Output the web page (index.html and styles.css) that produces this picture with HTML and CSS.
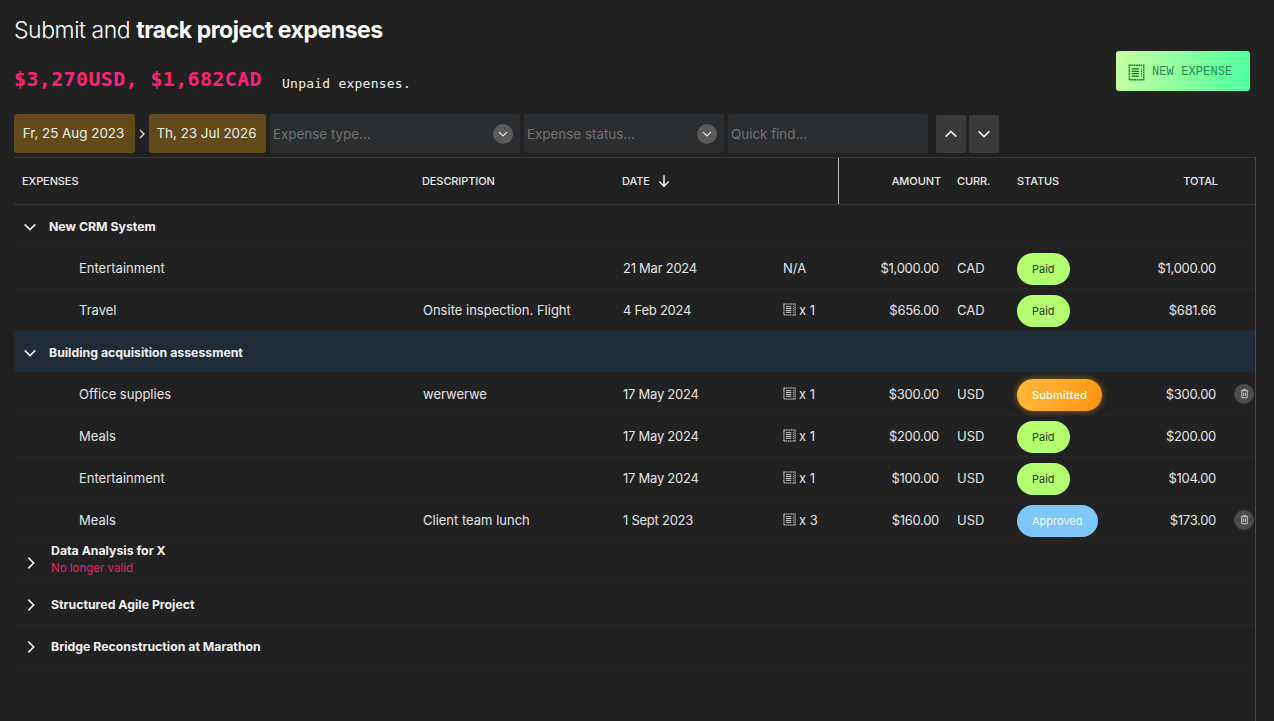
FILE: index.html
```html
<!DOCTYPE html>
<html lang="en">
<head>
    <meta charset="UTF-8">
    <meta name="viewport" content="width=device-width, initial-scale=1.0">
    <title>Project expenses</title>
    <link rel="stylesheet" href="styles.css">
</head>
<body>
    <svg class="sprites" width="0" height="0" aria-hidden="true">
        <symbol id="receipt" viewBox="0 0 14 14">
            <rect x="1" y="1" width="12" height="12" fill="none" stroke="currentColor" stroke-width="1.1" stroke-dasharray="1.4 .5"/>
            <path d="M3 4h6M3 6h6M3 8h6M3 10h6M10.6 4h1M10.6 6h1M10.6 8h1M10.6 10h1" stroke="currentColor" stroke-width="1" fill="none"/>
        </symbol>
        <symbol id="chev-down" viewBox="0 0 12 12">
            <path d="M2 4l4 4 4-4" fill="none" stroke="currentColor" stroke-width="1.2"/>
        </symbol>
        <symbol id="chev-right" viewBox="0 0 12 12">
            <path d="M4 2l4 4-4 4" fill="none" stroke="currentColor" stroke-width="1.2"/>
        </symbol>
        <symbol id="trash" viewBox="0 0 12 12">
            <path d="M2 3h8M4.5 3V1.6h3V3M3 3v7.6h6V3M5 5v3.6M7 5v3.6" fill="none" stroke="currentColor" stroke-width="1"/>
        </symbol>
    </svg>

    <div class="page">
        <div class="top">
            <div>
                <h1 class="title">Submit and <b>track project expenses</b></h1>
                <div class="summary">
                    <span class="unpaid">$3,270USD, $1,682CAD</span>
                    <span class="unpaid-label">Unpaid expenses.</span>
                </div>
            </div>
            <button class="new-expense">
                <svg class="new-icon"><use href="#receipt"/></svg>
                NEW EXPENSE
            </button>
        </div>

        <div class="filters">
            <div class="date date-from">Fr, 25 Aug 2023</div>
            <svg class="date-sep"><use href="#chev-right"/></svg>
            <div class="date date-to">Th, 23 Jul 2026</div>
            <div class="field field-type">Expense type...<span class="drop"><svg><use href="#chev-down"/></svg></span></div>
            <div class="field field-status">Expense status...<span class="drop"><svg><use href="#chev-down"/></svg></span></div>
            <div class="field field-find">Quick find...</div>
            <button class="step step-up"><svg><use href="#chev-down"/></svg></button>
            <button class="step"><svg><use href="#chev-down"/></svg></button>
        </div>

        <div class="table">
            <div class="row head">
                <div class="c1">EXPENSES</div>
                <div class="c2">DESCRIPTION</div>
                <div class="c3">DATE
                    <svg class="sort" viewBox="0 0 12 12"><path d="M6 1v9.5M2 6.5l4 4 4-4" fill="none" stroke="currentColor" stroke-width="1.3"/></svg>
                </div>
                <div class="c4 head-split"></div>
                <div class="c5">AMOUNT</div>
                <div class="c6">CURR.</div>
                <div class="c7">STATUS</div>
                <div class="c8">TOTAL</div>
            </div>

            <div class="group open"><svg class="toggle"><use href="#chev-down"/></svg>New CRM System</div>
            <div class="row item">
                <div class="c1">Entertainment</div><div class="c2"></div><div class="c3">21 Mar 2024</div>
                <div class="c4">N/A</div><div class="c5">$1,000.00</div><div class="c6">CAD</div>
                <div class="c7"><span class="pill paid">Paid</span></div><div class="c8">$1,000.00</div>
            </div>
            <div class="row item">
                <div class="c1">Travel</div><div class="c2">Onsite inspection. Flight</div><div class="c3">4 Feb 2024</div>
                <div class="c4"><svg class="rc"><use href="#receipt"/></svg>x 1</div><div class="c5">$656.00</div><div class="c6">CAD</div>
                <div class="c7"><span class="pill paid">Paid</span></div><div class="c8">$681.66</div>
            </div>

            <div class="group open current"><svg class="toggle"><use href="#chev-down"/></svg>Building acquisition assessment</div>
            <div class="row item">
                <div class="c1">Office supplies</div><div class="c2">werwerwe</div><div class="c3">17 May 2024</div>
                <div class="c4"><svg class="rc"><use href="#receipt"/></svg>x 1</div><div class="c5">$300.00</div><div class="c6">USD</div>
                <div class="c7"><span class="pill submitted">Submitted</span></div><div class="c8">$300.00</div>
                <div class="c9"><span class="del"><svg><use href="#trash"/></svg></span></div>
            </div>
            <div class="row item">
                <div class="c1">Meals</div><div class="c2"></div><div class="c3">17 May 2024</div>
                <div class="c4"><svg class="rc"><use href="#receipt"/></svg>x 1</div><div class="c5">$200.00</div><div class="c6">USD</div>
                <div class="c7"><span class="pill paid">Paid</span></div><div class="c8">$200.00</div>
            </div>
            <div class="row item">
                <div class="c1">Entertainment</div><div class="c2"></div><div class="c3">17 May 2024</div>
                <div class="c4"><svg class="rc"><use href="#receipt"/></svg>x 1</div><div class="c5">$100.00</div><div class="c6">USD</div>
                <div class="c7"><span class="pill paid">Paid</span></div><div class="c8">$104.00</div>
            </div>
            <div class="row item">
                <div class="c1">Meals</div><div class="c2">Client team lunch</div><div class="c3">1 Sept 2023</div>
                <div class="c4"><svg class="rc"><use href="#receipt"/></svg>x 3</div><div class="c5">$160.00</div><div class="c6">USD</div>
                <div class="c7"><span class="pill approved">Approved</span></div><div class="c8">$173.00</div>
                <div class="c9"><span class="del"><svg><use href="#trash"/></svg></span></div>
            </div>

            <div class="group closed"><svg class="toggle"><use href="#chev-right"/></svg>
                <div class="group-stack">Data Analysis for X<div class="invalid">No longer valid</div></div>
            </div>
            <div class="group closed"><svg class="toggle"><use href="#chev-right"/></svg>Structured Agile Project</div>
            <div class="group closed"><svg class="toggle"><use href="#chev-right"/></svg>Bridge Reconstruction at Marathon</div>
        </div>
    </div>
</body>
</html>
```

FILE: styles.css
```css
html, body {
    height: 100%;
}
body {
    margin: 0;
    background: #212121;
    color: #e4e4e4;
    font-family: Inter, "Liberation Sans", sans-serif;
    font-size: 13px;
    overflow: hidden;
}
.sprites {
    position: absolute;
}
.page {
    height: 100%;
    padding: 0 18px 0 14px;
    box-sizing: border-box;
    display: flex;
    flex-direction: column;
}

/* header */
.top {
    display: flex;
    justify-content: space-between;
    height: 114px;
}
.title {
    margin: 16px 0 0;
    font-size: 23px;
    line-height: 28px;
    font-weight: 300;
    letter-spacing: -0.45px;
    color: #fff;
}
.title b {
    font-weight: 700;
}
.summary {
    margin-top: 20px;
    display: flex;
    align-items: flex-end;
    gap: 20px;
    font-family: "DejaVu Sans Mono", monospace;
}
.unpaid {
    color: #fb2576;
    font-size: 20px;
    line-height: 30px;
    font-weight: 700;
    letter-spacing: 0.36px;
}
.unpaid-label {
    margin-bottom: 2px;
    color: #f0f0f0;
    font-size: 13px;
    line-height: 16px;
    letter-spacing: 0.23px;
}
.new-expense {
    margin: 51px 6px 0 0;
    width: 134px;
    height: 40px;
    padding: 2px 0 0 12px;
    display: flex;
    align-items: center;
    gap: 7px;
    border: 0;
    border-radius: 3px;
    background: linear-gradient(100deg, #c9ffa4, #4dff9f);
    color: #2d8a52;
    font-family: "Liberation Mono", monospace;
    font-size: 12px;
    letter-spacing: 0.1px;
}
.new-icon {
    width: 17px;
    height: 17px;
    color: #0b7d14;
}

/* filters */
.filters {
    display: flex;
    align-items: center;
    height: 39px;
    gap: 4px;
}
.date {
    height: 39px;
    line-height: 39px;
    padding-right: 2px;
    box-sizing: border-box;
    border-radius: 3px;
    background: #634a1a;
    color: #eee;
    text-align: center;
    font-size: 13.4px;
}
.date-from {
    width: 121px;
}
.date-to {
    width: 117px;
}
.date-sep {
    width: 12px;
    height: 12px;
    margin: 0 -3px;
    color: #eee;
}
.field {
    height: 39px;
    box-sizing: border-box;
    padding: 0 3px;
    display: flex;
    align-items: center;
    justify-content: space-between;
    border-radius: 3px;
    background: #2c2d2f;
    color: #727272;
    font-size: 13.4px;
}
.field-type {
    width: 250px;
}
.field-status {
    width: 200px;
}
.field-find {
    width: 200px;
}
.drop {
    width: 20px;
    height: 20px;
    margin-right: 4px;
    display: flex;
    align-items: center;
    justify-content: center;
    border-radius: 50%;
    background: #5a5a5a;
    color: #ddd;
}
.drop svg {
    width: 12px;
    height: 12px;
}
.step {
    width: 30px;
    height: 38px;
    padding: 0;
    display: flex;
    align-items: center;
    justify-content: center;
    border: 0;
    border-radius: 2px;
    background: #3a3a3a;
    color: #eee;
}
.step svg {
    width: 16px;
    height: 16px;
}
.step-up {
    margin-left: 4px;
    margin-right: -1px;
}
.step-up svg {
    transform: rotate(180deg);
}

/* table */
.table {
    flex: 1;
    margin-top: 4px;
    border-top: 1px solid #383838;
    border-right: 1px solid #4a4a4a;
}
.row {
    display: grid;
    grid-template-columns: 400px 200px 161px 64px 110px 60px 141px 76px 1fr;
    align-items: center;
    height: 42px;
    border-bottom: 1px solid #262626;
    box-sizing: border-box;
}
.row > div {
    padding-left: 8px;
    box-sizing: border-box;
    white-space: nowrap;
}
.head {
    height: 47px;
    border-bottom: 1px solid #383838;
    font-size: 11px;
    font-weight: 500;
    letter-spacing: -0.1px;
    color: #e8e8e8;
    align-items: stretch;
}
.head > div {
    display: flex;
    align-items: center;
}
.head-split {
    border-right: 1px solid #b8b8b8;
}
.sort {
    width: 14px;
    height: 14px;
    margin-left: 7px;
    color: #eee;
}
.row .c5, .row .c8 {
    padding: 0 10px 0 0;
    text-align: right;
    letter-spacing: -0.3px;
}
.head .c5, .head .c8 {
    padding-right: 8px;
    letter-spacing: -0.1px;
    justify-content: flex-end;
}
.item .c1 {
    padding-left: 65px;
}
.item .c2 {
    padding-left: 9px;
}
.item .c3 {
    padding-left: 9px;
    letter-spacing: -0.25px;
}
.item .c4 {
    display: flex;
    align-items: center;
}
.rc {
    width: 13px;
    height: 13px;
    margin-right: 3px;
    color: #ddd;
}
.group {
    height: 42px;
    padding-top: 2px;
    display: flex;
    align-items: center;
    box-sizing: border-box;
    border-bottom: 1px solid #262626;
    font-size: 12.3px;
    font-weight: 700;
    color: #f2f2f2;
}
.group.open {
    padding-left: 8px;
}
.group.closed {
    padding-left: 9px;
}
.current {
    background: #1f2c38;
}
.toggle {
    width: 16px;
    height: 16px;
    margin-right: 11px;
    color: #f0f0f0;
}
.group.closed .toggle {
    margin-right: 12px;
}
.group-stack {
    margin-bottom: 7px;
}
.invalid {
    margin-top: 4px;
    font-size: 11.5px;
    line-height: 13px;
    font-weight: 400;
    color: #e0246e;
}
.pill {
    display: inline-block;
    height: 32px;
    line-height: 32px;
    padding: 0 15px;
    border-radius: 16px;
    font-size: 11px;
    margin-top: 2px;
}
.paid {
    background: #b4ff70;
    color: #2b3a20;
}
.submitted {
    background: linear-gradient(110deg, #ffbb3e, #ff9410);
    color: #fff;
    font-weight: 500;
    letter-spacing: 0.2px;
    box-shadow: 0 0 6px rgba(255, 170, 40, 0.55);
}
.approved {
    background: #7fc6fa;
    color: #f4faff;
}
.del {
    width: 20px;
    height: 20px;
    display: flex;
    align-items: center;
    justify-content: center;
    border-radius: 50%;
    background: #4c4c4c;
    color: #ccc;
}
.del svg {
    width: 11px;
    height: 11px;
}
```
